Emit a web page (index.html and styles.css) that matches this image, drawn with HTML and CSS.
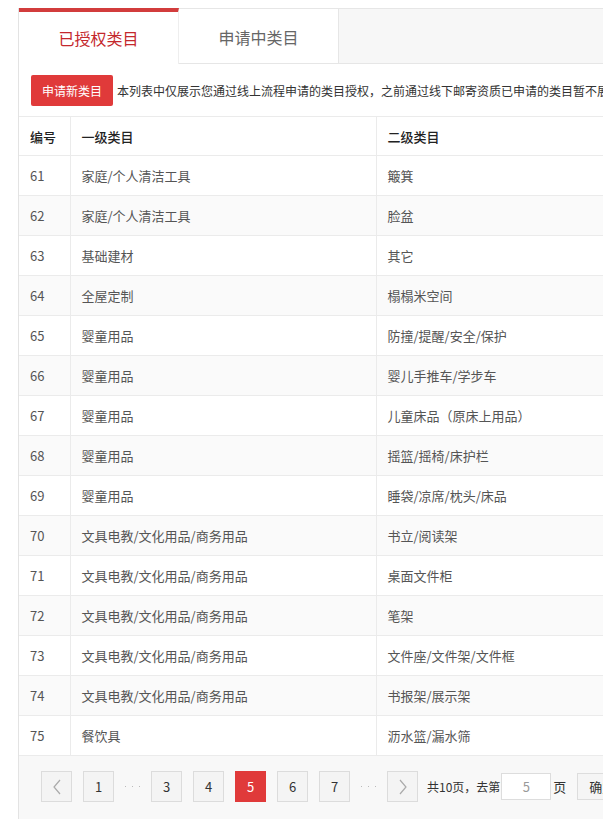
FILE: index.html
```html
<!DOCTYPE html>
<html lang="zh-CN">
<head>
<meta charset="utf-8">
<title>类目</title>
<link rel="stylesheet" href="styles.css">
</head>
<body>
<div class="panel">
  <div class="tabs">
    <div class="tab active">已授权类目</div>
    <div class="tab">申请中类目</div>
    <div class="tab-rest"></div>
  </div>
  <div class="toolbar">
    <button class="btn-red">申请新类目</button>
    <span class="notice">本列表中仅展示您通过线上流程申请的类目授权，之前通过线下邮寄资质已申请的类目暂不展示，如需查看请联系客服</span>
  </div>
  <table class="grid">
    <thead>
      <tr><th class="c1">编号</th><th class="c2">一级类目</th><th class="c3">二级类目</th></tr>
    </thead>
    <tbody>
      <tr><td>61</td><td>家庭/个人清洁工具</td><td>簸箕</td></tr>
      <tr><td>62</td><td>家庭/个人清洁工具</td><td>脸盆</td></tr>
      <tr><td>63</td><td>基础建材</td><td>其它</td></tr>
      <tr><td>64</td><td>全屋定制</td><td>榻榻米空间</td></tr>
      <tr><td>65</td><td>婴童用品</td><td>防撞/提醒/安全/保护</td></tr>
      <tr><td>66</td><td>婴童用品</td><td>婴儿手推车/学步车</td></tr>
      <tr><td>67</td><td>婴童用品</td><td>儿童床品（原床上用品）</td></tr>
      <tr><td>68</td><td>婴童用品</td><td>摇篮/摇椅/床护栏</td></tr>
      <tr><td>69</td><td>婴童用品</td><td>睡袋/凉席/枕头/床品</td></tr>
      <tr><td>70</td><td>文具电教/文化用品/商务用品</td><td>书立/阅读架</td></tr>
      <tr><td>71</td><td>文具电教/文化用品/商务用品</td><td>桌面文件柜</td></tr>
      <tr><td>72</td><td>文具电教/文化用品/商务用品</td><td>笔架</td></tr>
      <tr><td>73</td><td>文具电教/文化用品/商务用品</td><td>文件座/文件架/文件框</td></tr>
      <tr><td>74</td><td>文具电教/文化用品/商务用品</td><td>书报架/展示架</td></tr>
      <tr><td>75</td><td>餐饮具</td><td>沥水篮/漏水筛</td></tr>
    </tbody>
  </table>
  <div class="pager">
    <a class="pg arrow"><svg width="10" height="16" viewBox="0 0 10 16"><path d="M8 1 L2 8 L8 15" fill="none" stroke="#aaa" stroke-width="1.2"/></svg></a>
    <a class="pg">1</a>
    <span class="dots"><i></i><i></i><i></i></span>
    <a class="pg">3</a>
    <a class="pg">4</a>
    <a class="pg cur">5</a>
    <a class="pg">6</a>
    <a class="pg">7</a>
    <span class="dots"><i></i><i></i><i></i></span>
    <a class="pg arrow"><svg width="10" height="16" viewBox="0 0 10 16"><path d="M2 1 L8 8 L2 15" fill="none" stroke="#aaa" stroke-width="1.2"/></svg></a>
    <span class="total">共10页，去第</span>
    <input class="goto" type="text" value="5">
    <span class="unit">页</span>
    <button class="ok">确定</button>
  </div>
</div>
</body>
</html>
```
FILE: styles.css
```css
html, body {
  margin: 0;
  padding: 0;
  background: #fff;
  overflow: hidden;
}
body {
  font-family: "Microsoft YaHei", "Noto Sans CJK SC", "Noto Sans", sans-serif;
  color: #333;
  width: 603px;
  height: 819px;
}
.panel {
  margin: 8px 0 0 18px;
  width: 820px;
  border-left: 1px solid #e3e3e3;
}
.tabs {
  display: flex;
  height: 56px;
  box-sizing: border-box;
}
.tab {
  width: 160px;
  box-sizing: border-box;
  display: flex;
  align-items: center;
  justify-content: center;
  font-size: 16px;
  color: #666;
  background: #fff;
  border-top: 1px solid #e6e6e6;
  border-right: 1px solid #e6e6e6;
  border-bottom: 1px solid #e6e6e6;
  padding-top: 2px;
}
.tab.active {
  color: #c4282d;
  border-top: 4px solid #d23c3c;
  border-bottom: none;
  border-right: 1px solid #eee;
  padding-top: 0;
}
.tab-rest {
  flex: 1;
  background: #f7f7f7;
  border-top: 1px solid #e6e6e6;
  border-bottom: 1px solid #e6e6e6;
}
.toolbar {
  display: flex;
  align-items: center;
  height: 52px;
  padding-left: 12px;
  gap: 4px;
  white-space: nowrap;
  overflow: hidden;
}
.btn-red {
  width: 82px;
  height: 31px;
  border: none;
  border-radius: 2px;
  background: #e03a3a;
  color: #fff;
  font-family: inherit;
  font-size: 12px;
  padding: 0;
  margin-top: 1px;
}
.notice {
  font-size: 12px;
  color: #333;
}
.grid {
  border-collapse: collapse;
  width: 100%;
  table-layout: fixed;
  font-size: 13px;
}
.grid th, .grid td {
  text-align: left;
  padding: 0 11px;
  border-bottom: 1px solid #ebebeb;
  border-right: 1px solid #ebebeb;
  box-sizing: border-box;
}
.grid th {
  border-top: 1px solid #ebebeb;
  font-weight: 500;
  color: #222;
  background: #fff;
  height: 39px;
}
.grid td {
  color: #555;
  height: 40px;
}
.grid th.c1 { width: 51px; }
.grid th.c2 { width: 306px; }
.grid tbody tr:nth-child(even) td { background: #fafafa; }
.pager {
  display: flex;
  align-items: flex-start;
  gap: 11px;
  height: 70px;
  padding: 15px 0 0 22px;
  box-sizing: border-box;
  background: #f8f8f8;
}
.pg {
  width: 31px;
  height: 31px;
  box-sizing: border-box;
  border: 1px solid #dcdcdc;
  background: #f4f4f4;
  display: flex;
  align-items: center;
  justify-content: center;
  font-size: 13px;
  color: #333;
}
.pg.cur {
  background: #e03a3a;
  border-color: #e03a3a;
  color: #fff;
}
.dots {
  width: 15px;
  height: 31px;
  display: flex;
  align-items: center;
  justify-content: space-between;
}
.dots i {
  width: 1px;
  height: 1px;
  background: #bbb;
}
.total {
  font-size: 12px;
  line-height: 31px;
  color: #333;
  margin-left: -2px;
}
.goto {
  width: 50px;
  height: 27px;
  box-sizing: border-box;
  border: 1px solid #ddd;
  background: #fff;
  text-align: center;
  font-family: inherit;
  font-size: 13px;
  color: #999;
  margin: 2px 0 0 -10px;
  padding: 0;
}
.unit {
  font-size: 13px;
  line-height: 31px;
  margin-left: -9px;
}
.ok {
  height: 27px;
  width: 50px;
  box-sizing: border-box;
  border: 1px solid #ddd;
  background: #f5f5f5;
  font-family: inherit;
  font-size: 13px;
  color: #333;
  margin-top: 2px;
  padding: 0;
}
```
